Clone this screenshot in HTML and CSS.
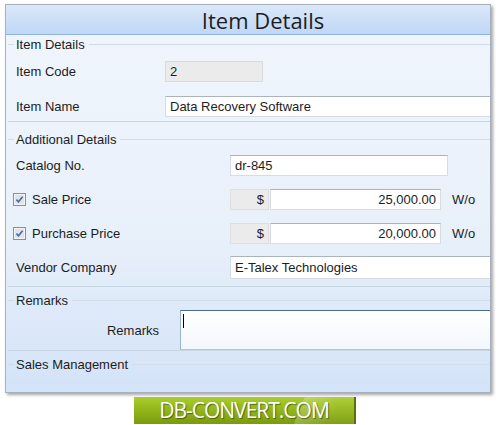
FILE: index.html
```html
<!DOCTYPE html>
<html lang="en">
<head>
    <meta charset="UTF-8">
    <meta name="viewport" content="width=device-width, initial-scale=1.0">
    <title>Item Details</title>
    <link rel="stylesheet" href="styles.css">
</head>
<body>
    <div class="window">
        <div class="title">Item Details</div>

        <!-- Item Details -->
        <div class="group group-item">
            <div class="legend"><span>Item Details</span></div>
            <div class="rows">
                <div class="row">
                    <span class="label">Item Code</span>
                    <div class="box box-code">2</div>
                </div>
                <div class="row">
                    <span class="label">Item Name</span>
                    <div class="box box-fill">Data Recovery Software</div>
                </div>
            </div>
        </div>

        <!-- Additional Details -->
        <div class="group group-additional">
            <div class="legend"><span>Additional Details</span></div>
            <div class="rows rows-tight">
                <div class="row">
                    <span class="label label-wide">Catalog No.</span>
                    <div class="box box-catalog">dr-845</div>
                </div>
                <div class="row">
                    <svg class="check" width="13" height="13" viewBox="0 0 13 13">
                        <rect x="0.5" y="0.5" width="12" height="12" fill="#f4f4f4" stroke="#8e8f8f"/>
                        <rect x="2" y="2" width="9" height="9" fill="#dfe3ea"/>
                        <path d="M3.4 6.6 L5.5 8.8 L9.6 3.8" fill="none" stroke="#4a6aa3" stroke-width="1.6"/>
                    </svg>
                    <span class="label label-check">Sale Price</span>
                    <div class="box box-currency">$</div>
                    <div class="box box-amount">25,000.00</div>
                    <span class="suffix">W/o</span>
                </div>
                <div class="row">
                    <svg class="check" width="13" height="13" viewBox="0 0 13 13">
                        <rect x="0.5" y="0.5" width="12" height="12" fill="#f4f4f4" stroke="#8e8f8f"/>
                        <rect x="2" y="2" width="9" height="9" fill="#dfe3ea"/>
                        <path d="M3.4 6.6 L5.5 8.8 L9.6 3.8" fill="none" stroke="#4a6aa3" stroke-width="1.6"/>
                    </svg>
                    <span class="label label-check">Purchase Price</span>
                    <div class="box box-currency">$</div>
                    <div class="box box-amount">20,000.00</div>
                    <span class="suffix">W/o</span>
                </div>
                <div class="row">
                    <span class="label label-wide">Vendor Company</span>
                    <div class="box box-fill box-tall">E-Talex Technologies</div>
                </div>
            </div>
        </div>

        <!-- Remarks -->
        <div class="group group-remarks">
            <div class="legend"><span>Remarks</span></div>
            <div class="rows rows-remarks">
                <div class="row row-remarks">
                    <span class="label label-right">Remarks</span>
                    <div class="memo"><span class="caret"></span></div>
                </div>
            </div>
        </div>

        <!-- Sales Management -->
        <div class="group group-sales">
            <div class="legend"><span>Sales Management</span></div>
        </div>
    </div>

    <div class="logo">DB-CONVERT.COM</div>
</body>
</html>
```

FILE: styles.css
```css
body {
    margin: 0;
    background: #fff;
    font-family: "Liberation Sans", Arial, sans-serif;
    font-size: 13px;
    color: #1c1c1c;
}

.window {
    margin: 4px 0 0 5px;
    width: 486px;
    height: 389px;
    box-sizing: border-box;
    border: 1px solid #a7b1bd;
    background: linear-gradient(#f1f6fd, #e8f0fa 60%, #d3e3f8);
    box-shadow: 2px 2px 3px rgba(0, 0, 0, 0.35);
    display: flex;
    flex-direction: column;
}

.title {
    height: 29px;
    line-height: 30px;
    padding-left: 30px;
    text-align: center;
    font-family: "Open Sans", sans-serif;
    font-size: 22px;
    color: #1e1e1e;
    background: linear-gradient(#dbe8fa, #c0d7f6);
    border-bottom: 1px solid #8fb1dd;
}

.group {
    margin-left: 2px;
    border-bottom: 1px solid #c8d5e3;
}

.legend {
    display: flex;
    align-items: center;
    height: 18px;
}

.legend::before {
    content: "";
    width: 6px;
    margin-right: 2px;
    border-top: 1px solid #d2dce8;
}

.legend::after {
    content: "";
    flex: 1;
    margin-left: 4px;
    border-top: 1px solid #d2dce8;
}

.rows {
    display: flex;
    flex-direction: column;
    gap: 14px;
    padding-left: 8px;
}

.rows-tight {
    gap: 13px;
}

.row {
    display: flex;
    align-items: center;
    height: 21px;
}

.label {
    width: 149px;
    flex-shrink: 0;
}

.label-wide {
    width: 214px;
}

.label-check {
    width: 198px;
}

.label-right {
    width: 143px;
    margin-right: 21px;
    text-align: right;
}

.check {
    margin-left: -3px;
    margin-right: 6px;
    flex-shrink: 0;
}

.group-item {
    padding-bottom: 4px;
}

.group-item .rows {
    padding-top: 8px;
}

.group-additional {
    padding-top: 8px;
    padding-bottom: 8px;
}

.group-additional .rows {
    padding-top: 7px;
}

.group-remarks {
    padding-top: 4px;
}

.rows-remarks {
    padding-top: 1px;
}

.group-sales {
    padding-top: 4px;
    flex: 1;
    border-bottom: none;
}

.box {
    height: 21px;
    box-sizing: border-box;
    padding: 0 4px;
    line-height: 19px;
    background: #fff;
    border: 1px solid #d6dce3;
    border-top-color: #abb3bc;
    white-space: nowrap;
    overflow: hidden;
}

.box-code {
    width: 98px;
    background: #ebebeb;
    border-color: #dadada;
}

.box-fill {
    flex: 1;
    border-right: none;
}

.box-tall {
    height: 23px;
    line-height: 21px;
}

.box-catalog {
    width: 218px;
}

.box-currency {
    width: 39px;
    text-align: right;
    background: #ebebeb;
    border-color: #dedede;
}

.box-amount {
    width: 171px;
    margin-left: 1px;
    text-align: right;
}

.suffix {
    margin-left: 11px;
}

.row-remarks {
    height: 40px;
}

.memo {
    flex: 1;
    height: 40px;
    box-sizing: border-box;
    background: linear-gradient(#fff, #f3f7fc);
    border: 1px solid #b3c6da;
    border-top-color: #4d6b8f;
    border-left-color: #9bb3cd;
    border-right: none;
}

.caret {
    display: block;
    width: 1px;
    height: 14px;
    margin: 3px 0 0 2px;
    background: #000;
}

.logo {
    margin: 4px 0 0 134px;
    width: 222px;
    height: 27px;
    box-sizing: border-box;
    border-right: 2px solid #5b700a;
    background:
        linear-gradient(112deg, transparent 74%, rgba(255, 255, 255, 0.22) 74%, rgba(255, 255, 255, 0.05) 90%),
        linear-gradient(#a9cd2c, #8fb218 55%, #7b9a0e);
    color: #fff;
    font-family: "Open Sans", sans-serif;
    font-size: 21px;
    letter-spacing: -1px;
    line-height: 27px;
    text-align: center;
    text-shadow: 1px 1px 1px rgba(40, 50, 0, 0.6);
}
```
